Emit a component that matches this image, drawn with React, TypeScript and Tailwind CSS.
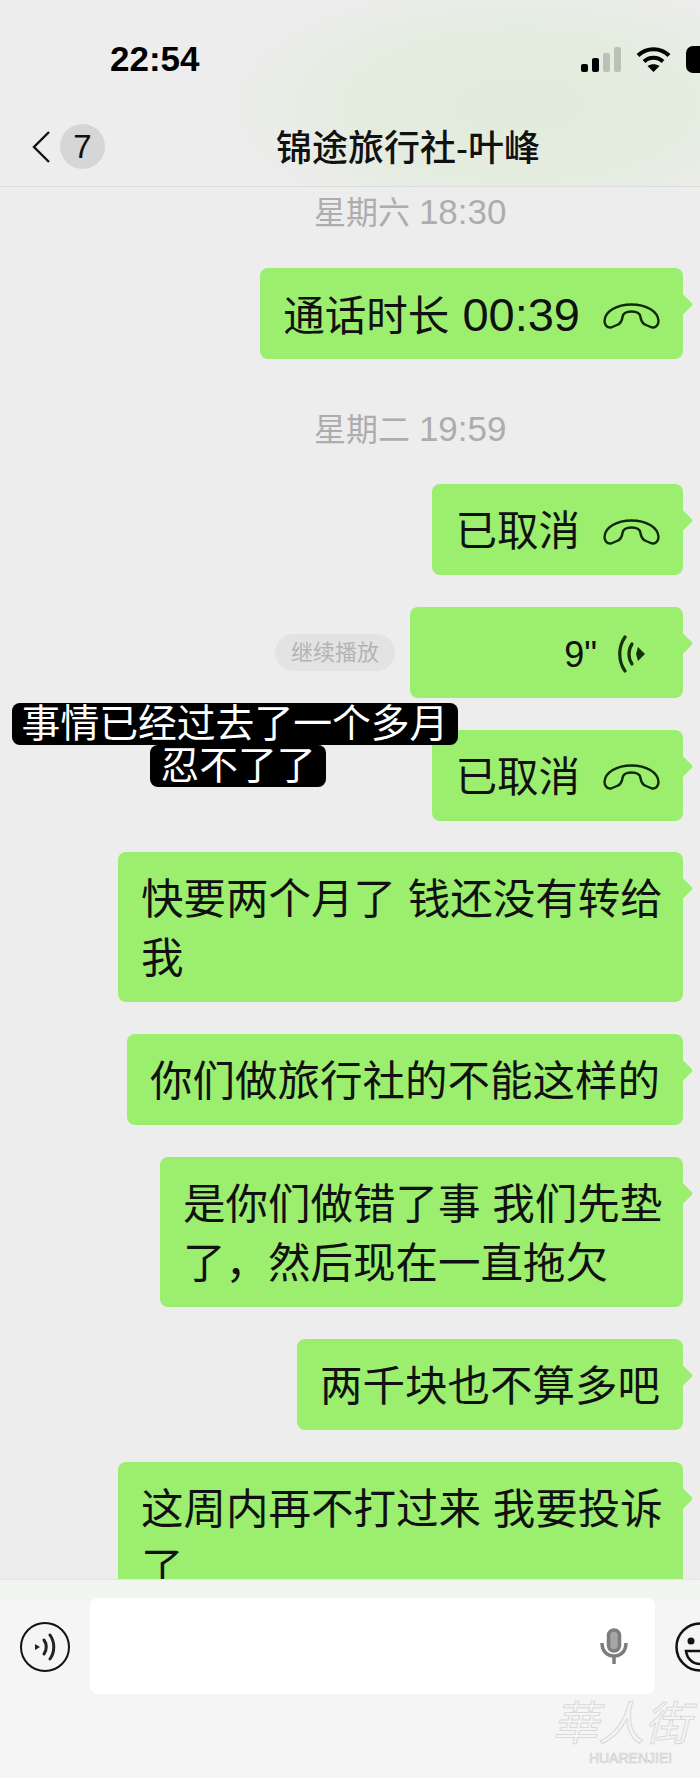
const FONT = 'font-["Liberation_Sans","Noto_Sans_CJK_SC",sans-serif]';

function Hangup() {
  return (
    <svg width="57" height="26" viewBox="0 0 57 26" fill="none" stroke="#0f2a0a" strokeWidth="2.400" strokeLinejoin="round" className="shrink-0">
      <path d="M1.500 18C2 8 14 1.500 28.500 1.500S55 8 55.500 18c0 4-2.500 7-6.500 6.500L43 22c-4-1.500-5-4-5.500-8-.5-4-4.500-5.500-9-5.500s-8.500 1.500-9 5.500c-.5 4-1.500 6.500-5.500 8l-6 2.500C4 25 1.500 22 1.500 18Z" />
    </svg>
  );
}

function Bubble({ children, className = '' }: { children: React.ReactNode; className?: string }) {
  return (
    <div className={`relative shrink-0 rounded-[8px] bg-[#9bee6e] px-[23px] pb-[14px] pt-[18px] text-[42.5px] leading-[59px] text-[#111] ${className}`}>
      {children}
      <span className="absolute right-[-7px] top-[29px] h-[15px] w-[15px] rotate-45 rounded-[2px] bg-[#9bee6e]" />
    </div>
  );
}

function CallBubble({ label, duration }: { label: string; duration?: string }) {
  return (
    <Bubble>
      <div className="flex h-[59px] items-center gap-[23px]">
        <span className="whitespace-nowrap text-[41.500px]">
          {label}
          {duration && <span className="text-[47px]"> {duration}</span>}
        </span>
        <Hangup />
      </div>
    </Bubble>
  );
}

function TimeLabel({ day, time, className = '' }: { day: string; time: string; className?: string }) {
  return (
    <div className={`h-[50px] w-[683px] shrink-0 pl-[314px] text-[32px] leading-[50px] text-[#adadad] ${className}`}>
      {day} <span className="text-[35px]">{time}</span>
    </div>
  );
}

function StatusIcons() {
  return (
    <div className="flex items-center gap-[15px]">
      <div className="flex items-end gap-[4px]">
        <span className="h-[8px] w-[7px] rounded-[2px] bg-black" />
        <span className="h-[14px] w-[7px] rounded-[2px] bg-black" />
        <span className="h-[19px] w-[7px] rounded-[2px] bg-[#b9c2b5]" />
        <span className="h-[25px] w-[7px] rounded-[2px] bg-[#b9c2b5]" />
      </div>
      <svg width="35" height="26" viewBox="0 0 35 26" fill="none" stroke="#000" strokeWidth="4">
        <path d="M2 9.500C10.500 1 24.500 1 33 9.500" />
        <path d="M8 15.500c5.500-5 13.500-5 19 0" />
        <path d="M17.500 26l-6-6c3.500-2.500 8.500-2.500 12 0z" fill="#000" stroke="none" />
      </svg>
      <span className="h-[27px] w-[40px] shrink-0 rounded-[7px] bg-black" />
    </div>
  );
}

export default function App() {
  return (
    <div className={`relative flex h-[1778px] w-[700px] flex-col overflow-hidden bg-[#ededed] ${FONT}`}>
      {/* top bars */}
      <div className="h-[187px] shrink-0 border-b border-[#dcdcdc] bg-[radial-gradient(ellipse_300px_130px_at_520px_105px,#e1ecdc_0%,#e4ecdf_55%,#ededed_100%)]">
        <div className="flex h-[124px] items-center justify-between pb-[6px] pl-[110px]">
          <span className="text-[35px] font-semibold leading-[40px] text-black">22:54</span>
          <div className="mr-[-26px]">
            <StatusIcons />
          </div>
        </div>
        <div className="relative flex h-[45px] items-center pl-[31px]">
          <svg width="20" height="34" viewBox="0 0 20 34" fill="none" stroke="#111" strokeWidth="2.400" className="shrink-0">
            <path d="M18 2 3 17l15 15" />
          </svg>
          <span className="ml-[9px] flex h-[45px] w-[45px] items-center justify-center rounded-full bg-[#d6d6d6] text-[33px] text-[#111]">7</span>
          <span className="absolute left-[276px] top-[2px] whitespace-nowrap text-[36px] font-medium leading-[45px] text-[#111]">锦途旅行社-叶峰</span>
        </div>
      </div>

      {/* messages */}
      <div className="flex min-h-0 flex-1 flex-col items-end overflow-hidden pr-[17px]">
        <TimeLabel day="星期六" time="18:30" />
        <div className="mt-[31px]">
          <CallBubble label="通话时长" duration="00:39" />
        </div>
        <TimeLabel day="星期二" time="19:59" className="mb-[30px] mt-[45px]" />
        <div className="flex flex-col items-end gap-[31.800px]">
          <CallBubble label="已取消" />
          <div className="flex items-center gap-[15px]">
            <span className="rounded-full bg-[#e3e3e3] px-[16px] text-[22px] leading-[37px] text-[#b3b3b3]">继续播放</span>
            <Bubble className="w-[273px]">
              <div className="flex h-[59px] items-center justify-end gap-[21px] pr-[14px]">
                <span className="text-[36px]">9"</span>
                <svg width="28" height="38" viewBox="0 0 28 38" fill="none" stroke="#16300c" strokeWidth="3.200" strokeLinecap="round">
                  <path d="M7 2C0 12 0 26 7 36" />
                  <path d="M14 9c-4 6-4 14 0 20" />
                  <path d="M20 12l7 7-7 7-2-7z" fill="#16300c" stroke="none" />
                </svg>
              </div>
            </Bubble>
          </div>
          <CallBubble label="已取消" />
          <Bubble className="w-[565px] whitespace-nowrap">
            快要两个月了 钱还没有转给
            <br />
            我
          </Bubble>
          <Bubble>你们做旅行社的不能这样的</Bubble>
          <Bubble className="w-[523px] whitespace-nowrap">
            是你们做错了事 我们先垫
            <br />
            了，然后现在一直拖欠
          </Bubble>
          <Bubble>两千块也不算多吧</Bubble>
          <Bubble className="w-[565px] whitespace-nowrap">
            这周内再不打过来 我要投诉
            <br />了
          </Bubble>
        </div>
      </div>

      {/* input bar */}
      <div className="flex h-[199px] shrink-0 items-start gap-[20px] overflow-hidden border-t border-[#e6e6e6] bg-[linear-gradient(#f1f5ef,#f5f5f5_14%)] pl-[20px] pt-[18px]">
        <div className="mt-[24px] flex h-[50px] w-[50px] shrink-0 items-center justify-center rounded-full border-[2.500px] border-[#111]">
          <svg width="22" height="28" viewBox="0 0 22 28" fill="none" stroke="#222" strokeWidth="3" strokeLinecap="round">
            <path d="M1 11l5 3-5 3z" fill="#222" stroke="none" />
            <path d="M10 7c3 4 3 10 0 14" />
            <path d="M16 2c5 7 5 17 0 24" />
          </svg>
        </div>
        <div className="flex h-[96px] w-[565px] shrink-0 items-center justify-end rounded-[8px] bg-white pr-[27px]">
          <svg width="28" height="36" viewBox="0 0 28 36" fill="none" stroke="#7d7d7d" strokeWidth="3.500">
            <rect x="8.500" y="2" width="11" height="21" rx="5.500" fill="#a5a5a5" />
            <path d="M2 15c0 8 5 13 12 13s12-5 12-13" />
            <path d="M14 28v8" />
          </svg>
        </div>
        <svg width="50" height="50" viewBox="0 0 50 50" fill="none" stroke="#111" strokeWidth="2.500" className="mt-[24px] shrink-0">
          <circle cx="25" cy="25" r="23.500" />
          <circle cx="16" cy="19" r="3.500" fill="#111" stroke="none" />
          <path d="M11 29h28c-1 8-7 13-14 13s-13-5-14-13Z" />
        </svg>
      </div>

      {/* burned-in subtitles */}
      <div className="absolute left-[11px] top-[703px] flex w-[448px] flex-col items-center text-[38.800px] leading-[42px] text-white">
        <span className="whitespace-nowrap rounded-[8px] bg-black px-[10px]">事情已经过去了一个多月</span>
        <span className="ml-[6px] whitespace-nowrap rounded-[8px] bg-black px-[10px]">忍不了了</span>
      </div>

      {/* watermark */}
      <div className="absolute left-[548px] top-[1698px] flex w-[147px] flex-col items-center text-transparent">
        <span className="text-[46px] leading-[52px] italic [-webkit-text-stroke:1px_#dadada]">華人街</span>
        <span className="pl-[18px] text-[14px] leading-[16px] [-webkit-text-stroke:0.7px_#cfcfcf]">HUARENJIEI</span>
      </div>
    </div>
  );
}
